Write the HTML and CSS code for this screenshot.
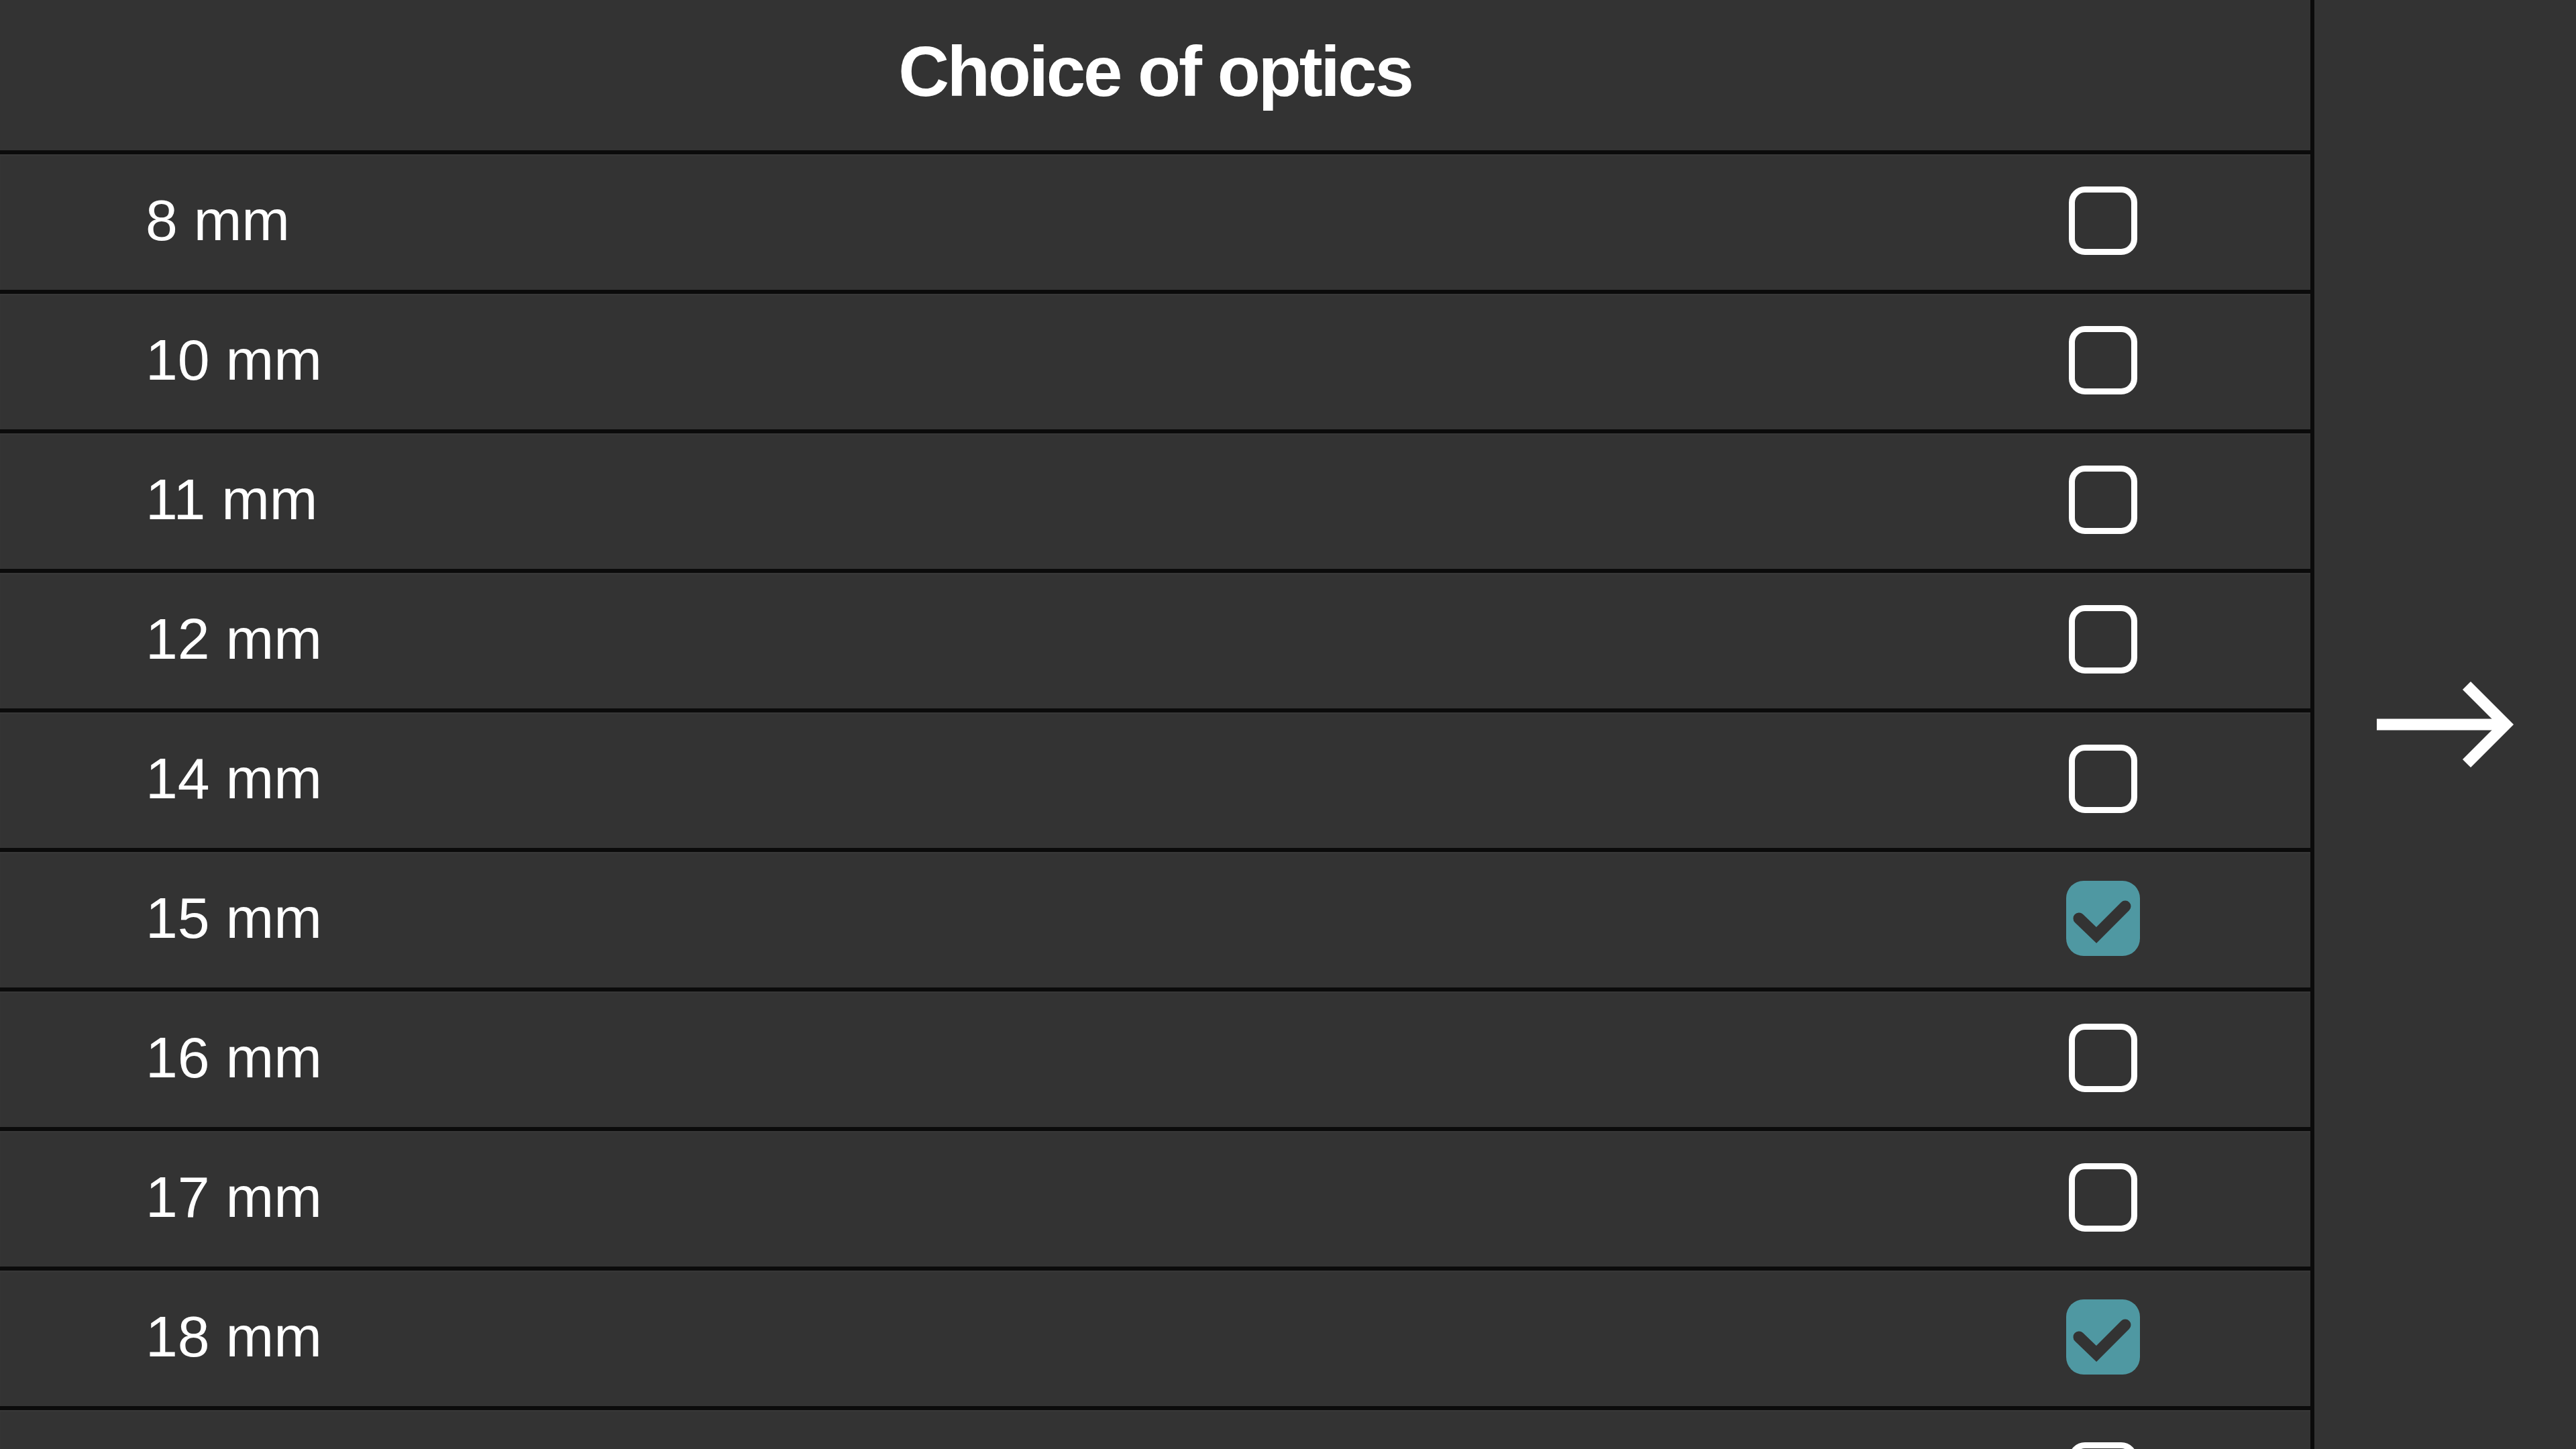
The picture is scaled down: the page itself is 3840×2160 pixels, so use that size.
FILE: index.html
```html
<!DOCTYPE html>
<html lang="en">
    <head>
        <meta charset="utf-8">
        <title>Choice of optics</title>
        <link rel="stylesheet" href="styles.css">
    </head>
    <body>
        <div class="screen">
            <section class="optics">
                <header class="optics-head">
                    <h1>Choice of optics</h1>
                </header>
                <ul class="optics-list">
                    <li class="row"><span class="label">8 mm</span><span class="slot"><span class="box"></span></span></li>
                    <li class="row"><span class="label">10 mm</span><span class="slot"><span class="box"></span></span></li>
                    <li class="row"><span class="label">11 mm</span><span class="slot"><span class="box"></span></span></li>
                    <li class="row"><span class="label">12 mm</span><span class="slot"><span class="box"></span></span></li>
                    <li class="row"><span class="label">14 mm</span><span class="slot"><span class="box"></span></span></li>
                    <li class="row"><span class="label">15 mm</span><span class="slot"><span class="box checked">
                        <svg viewBox="0 0 110 112" width="110" height="112"><polyline points="19,56 45,81 88,38" /></svg>
                    </span></span></li>
                    <li class="row"><span class="label">16 mm</span><span class="slot"><span class="box"></span></span></li>
                    <li class="row"><span class="label">17 mm</span><span class="slot"><span class="box"></span></span></li>
                    <li class="row"><span class="label">18 mm</span><span class="slot"><span class="box checked">
                        <svg viewBox="0 0 110 112" width="110" height="112"><polyline points="19,56 45,81 88,38" /></svg>
                    </span></span></li>
                    <!-- next row only peeks in at the bottom edge -->
                    <li class="row"><span class="label"></span><span class="slot"><span class="box"></span></span></li>
                </ul>
            </section>
            <aside class="next">
                <svg class="arrow" viewBox="0 0 220 150" width="220" height="150">
                    <line x1="7" y1="75" x2="200" y2="75" />
                    <polyline points="141,17 199,75 141,133" />
                </svg>
            </aside>
        </div>
    </body>
</html>
```

FILE: styles.css
```css
* {
    margin: 0;
    padding: 0;
    box-sizing: border-box;
}
:root {
    --bg-color: #333333;
    --line-color: #0b0b0b;
    --fg-color: #ffffff;
    --accent-color: #4f98a2;
}
html, body {
    height: 100%;
    overflow: hidden;
}
body {
    font-family: "Liberation Sans", Arial, Helvetica, sans-serif;
    background-color: var(--bg-color);
    color: var(--fg-color);
}
.screen {
    display: flex;
    height: 2160px;
}
.optics {
    flex: 0 0 3450px;
    border-right: 6px solid var(--line-color);
    overflow: hidden;
}
.optics-head {
    height: 230px;
    display: flex;
    align-items: center;
    justify-content: center;
    padding-bottom: 10px;
    border-bottom: 6px solid var(--line-color);
}
.optics-head h1 {
    font-size: 105px;
    font-weight: bold;
    letter-spacing: -3.2px;
}
.optics-list {
    list-style: none;
}
.row {
    height: 208px;
    display: flex;
    align-items: center;
    justify-content: space-between;
    padding: 0 254px 0 217px;
    border-bottom: 6px solid var(--line-color);
    box-shadow: inset 0 2px 2px rgba(255, 255, 255, 0.03);
}
.label {
    font-size: 86px;
    margin-bottom: 6px;
}
.slot {
    width: 110px;
    height: 112px;
    display: flex;
    align-items: center;
    justify-content: center;
    margin-bottom: 4px;
}
.box {
    width: 102px;
    height: 102px;
    border: 9px solid var(--fg-color);
    border-radius: 24px;
}
.box.checked {
    width: 110px;
    height: 112px;
    border: none;
    border-radius: 26px;
    background-color: var(--accent-color);
}
.box.checked svg {
    display: block;
    fill: none;
    stroke: var(--bg-color);
    stroke-width: 17;
    stroke-linecap: round;
    stroke-linejoin: miter;
}
.next {
    flex: 1;
    display: flex;
    align-items: center;
    justify-content: center;
}
.arrow {
    fill: none;
    stroke: var(--fg-color);
    stroke-width: 17;
    stroke-linejoin: miter;
    margin-left: 2px;
}
```
